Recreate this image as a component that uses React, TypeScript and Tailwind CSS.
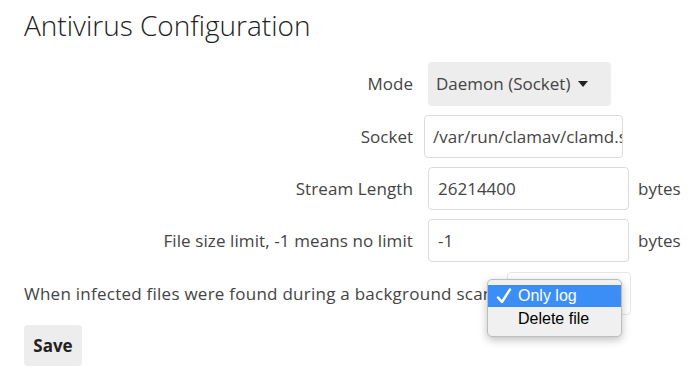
import { Fragment } from "react";

const rows = [
  { label: "Stream Length", value: "26214400" },
  { label: "File size limit, -1 means no limit", value: "-1" },
];

export default function App() {
  return (
    <div
      className="min-h-screen bg-white px-6 text-[#222] text-[17px]"
      style={{ fontFamily: '"Open Sans", "Liberation Sans", sans-serif' }}
    >
      {/* Header */}
      <h1 className="pt-[6px] text-[28px] font-light leading-[38px] text-[#222]">
        Antivirus Configuration
      </h1>

      {/* Form rows */}
      <div className="mt-[18px] grid grid-cols-[389px_auto_1fr] items-center gap-y-[9px]">
        <label className="text-right text-[#444]">Mode</label>
        <div className="ml-[15px] flex h-[44px] w-[183px] items-center gap-[8px] rounded-[4px] bg-[#ededed] pl-[8px] text-[#444]">
          <span className="whitespace-nowrap">Daemon (Socket)</span>
          <svg width="10" height="6" viewBox="0 0 10 6">
            <path d="M0 0h10L5 6z" fill="#222" />
          </svg>
        </div>
        <div />

        <label className="text-right text-[#444]">Socket</label>
        <input
          readOnly
          value="/var/run/clamav/clamd.sock"
          className="ml-[11px] h-[43px] w-[199px] rounded-[4px] border border-[#dbdbdb] pl-[8px] text-[#444] outline-none"
        />
        <div />

        {rows.map((r) => (
          <Fragment key={r.label}>
            <label className="whitespace-nowrap text-right tracking-[0.1px] text-[#444]">{r.label}</label>
            <input
              readOnly
              value={r.value}
              className="ml-[15px] h-[43px] w-[201px] rounded-[4px] border border-[#dbdbdb] pl-[9px] text-[#444] outline-none"
            />
            <span className="ml-[9px] text-[#444]">bytes</span>
          </Fragment>
        ))}
      </div>

      {/* Background scan action */}
      <div className="relative mt-[10px] flex h-[43px] items-center">
        <span className="whitespace-nowrap tracking-[0.25px] text-[#444]">
          When infected files were found during a background scan
        </span>
        <div className="absolute left-[483px] top-0 h-[43px] w-[124px] rounded-[4px] border border-[#e6e6e6] bg-white" />

        {/* Native select menu */}
        <div
          className="absolute left-[463px] top-[7px] w-[135px] rounded-[5px] border border-[#bdbdbd] bg-[#f0f0f0] py-[5px] text-[16px] text-black shadow-[0_3px_8px_rgba(0,0,0,0.25)]"
          style={{ fontFamily: '"Liberation Sans", Arial, sans-serif' }}
        >
          <div className="flex h-[22px] items-center bg-[#3b8ef5] text-white">
            <span className="flex w-[30px] justify-center pl-[1px]">
              <svg width="16" height="16" viewBox="0 0 16 16">
                <path
                  d="M2 9.5 L6 14 L14 1.5"
                  fill="none"
                  stroke="#fff"
                  strokeWidth="2.4"
                  strokeLinecap="round"
                  strokeLinejoin="round"
                />
              </svg>
            </span>
            <span>Only log</span>
          </div>
          <div className="flex h-[24px] items-center">
            <span className="w-[30px]" />
            <span>Delete file</span>
          </div>
        </div>
      </div>

      <button className="mt-[10px] h-[41px] w-[58px] rounded-[4px] bg-[#ededed] text-[17px] font-bold text-[#222]">
        Save
      </button>
    </div>
  );
}
